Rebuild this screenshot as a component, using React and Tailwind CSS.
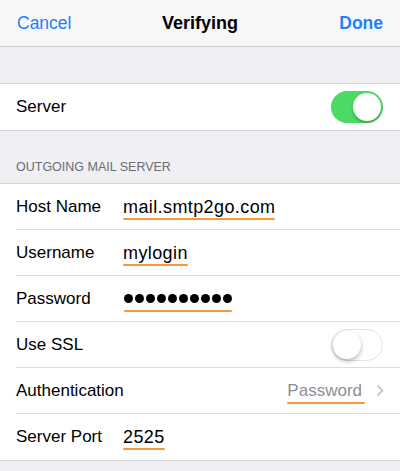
import React from 'react';

const font = { fontFamily: '"Liberation Sans", Arial, sans-serif' };

const Underlined = ({ children, className = '' }) => (
  <span className={`relative inline-block ${className}`}>
    {children}
    {/* orange highlight line */}
    <span className="absolute left-0 right-0 -bottom-[3px] h-[2px] rounded-full bg-[#f7963d]" />
  </span>
);

const Toggle = ({ on }) =>
  on ? (
    <div className="w-[52px] h-[32px] rounded-full bg-[#4cd964] flex items-center justify-end p-[2px]">
      <div className="w-[28px] h-[28px] rounded-full bg-white shadow-[0_2px_3px_rgba(0,0,0,0.25)]" />
    </div>
  ) : (
    <div className="w-[52px] h-[32px] rounded-full bg-white border-[1.5px] border-[#e3e3e6] flex items-center justify-start p-[1px]">
      <div className="w-[28px] h-[28px] rounded-full bg-white shadow-[0_2px_4px_rgba(0,0,0,0.3)]" />
    </div>
  );

const Row = ({ label, children, last }) => (
  <div className="pl-4">
    <div className={`h-[46px] flex items-center pr-4 ${last ? '' : 'border-b border-[#dcdce0]'}`}>
      <span className="w-[107px] shrink-0 text-[17px] text-black">{label}</span>
      <div className="flex-1 flex items-center">{children}</div>
    </div>
  </div>
);

const valueCls = 'text-[18px] tracking-[0.4px] text-black leading-5';

const App = () => {
  return (
    <div className="w-[400px] h-[471px] bg-[#efeff4] overflow-hidden" style={font}>
      {/* === Navigation bar === */}
      <div className="h-[47px] bg-[#f7f7f7] border-b border-[#c8c7cc] grid grid-cols-3 items-center px-[17px]">
        <span className="text-[17.5px] text-[#1a82fb]">Cancel</span>
        <span className="text-[18px] font-bold text-black text-center">Verifying</span>
        <span className="text-[17.5px] font-bold text-[#1a82fb] text-right">Done</span>
      </div>

      <div className="h-[36px]" />

      {/* === Server toggle === */}
      <div className="bg-white border-y border-[#d6d6da] h-[48px] flex items-center justify-between pl-4 pr-[17px]">
        <span className="text-[17px] text-black">Server</span>
        <Toggle on />
      </div>

      {/* === Section header === */}
      <div className="h-[52px] flex items-end px-4 pb-[6px]">
        <span className="text-[12.5px] text-[#6d6d72]">OUTGOING MAIL SERVER</span>
      </div>

      {/* === Outgoing server group === */}
      <div className="bg-white border-y border-[#d6d6da]">
        <Row label="Host Name">
          <Underlined className={valueCls}>mail.smtp2go.com</Underlined>
        </Row>
        <Row label="Username">
          <Underlined className={valueCls}>mylogin</Underlined>
        </Row>
        <Row label="Password">
          <Underlined className="ml-[1px]">
            <span className="flex items-center gap-[2px] h-5">
              {Array.from({ length: 10 }).map((_, i) => (
                <span key={i} className="w-[9px] h-[9px] rounded-full bg-black" />
              ))}
            </span>
          </Underlined>
        </Row>
        <Row label="Use SSL">
          <div className="flex-1 flex justify-end pr-[1px]">
            <Toggle on={false} />
          </div>
        </Row>
        <Row label="Authentication">
          <div className="flex-1 flex justify-end items-center gap-[11px]">
            <Underlined className="text-[17px] text-[#8e8e93] leading-5 pr-[3px]">Password</Underlined>
            <svg width="8" height="13" viewBox="0 0 8 13" fill="none">
              <path d="M1.5 1.5 L6.5 6.5 L1.5 11.5" stroke="#c7c7cc" strokeWidth="1.8" />
            </svg>
          </div>
        </Row>
        <Row label="Server Port" last>
          <Underlined className={valueCls}>2525</Underlined>
        </Row>
      </div>
    </div>
  );
};

export default App;
